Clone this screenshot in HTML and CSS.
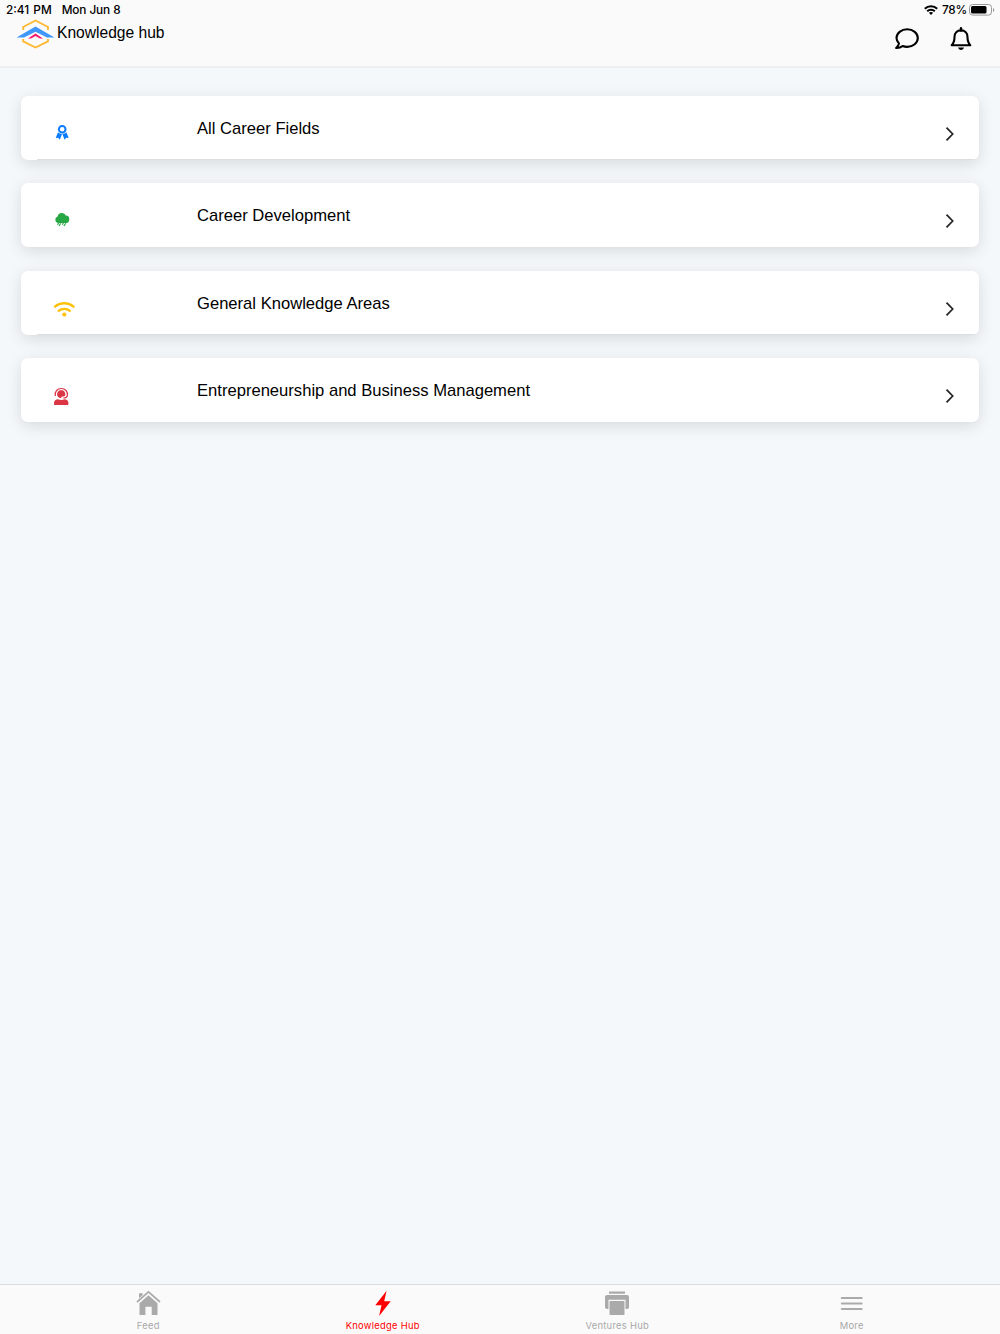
FILE: index.html
```html
<!DOCTYPE html>
<html lang="en">
<head>
    <meta charset="UTF-8">
    <title>Knowledge hub</title>
    <link rel="stylesheet" href="styles.css">
</head>
<body>
    <header class="header">
        <div class="status-bar">
            <span class="time">2:41 PM</span>
            <span class="date">Mon Jun 8</span>
            <svg class="wifi" width="14" height="10" viewBox="0 0 14 10" fill="none" stroke="#000" stroke-width="2">
                <path d="M.8 3.7C4.2.3 9.800.3 13.200 3.700M3.200 6.200c2-2 5.600-2 7.600 0"/>
                <path d="M4.900 7.800c1.200-1 3-1 4.200 0L7 9.900z" fill="#000" stroke="none"/>
            </svg>
            <span class="percent">78%</span>
            <svg class="battery" width="26" height="12" viewBox="0 0 26 12">
                <rect x=".5" y=".5" width="22" height="10.600" rx="3" fill="none" stroke="#999"/>
                <rect x="2" y="2" width="15.500" height="7.600" rx="1.500"/>
                <path d="M24 4v4c1.700-.6 1.700-3.400 0-4z" fill="#999"/>
            </svg>
        </div>
        <div class="title-bar">
            <svg class="logo" width="40" height="30" viewBox="0 0 40 30">
                <path d="M8.200 11V8L20.500 1.500 33 8v3M8.200 20v2.300l12.300 6.200L33 22.300V20" fill="none" stroke="#fdb933" stroke-width="1.900"/>
                <path d="M1.500 18.500L20.500 7.500 39.500 18.500H32L20.500 12.700 9 18.500z" fill="#3f97fb"/>
                <path d="M13 19.500l7.500-4.900L28 19.500h-3l-4.500-2.600-4.500 2.600z" fill="#f5166c"/>
            </svg>
            <h1>Knowledge hub</h1>
            <div class="actions">
                <svg width="26" height="24" viewBox="0 0 26 24" fill="none" stroke="#000" stroke-width="2.100" stroke-linejoin="round">
                    <path d="M5 16.400C3.400 14.900 2.500 13.100 2.500 11 2.500 6.100 7.300 2.300 13.200 2.300S23.800 6.100 23.800 11s-4.700 8.900-10.600 8.900c-1.700 0-3.200-.3-4.600-.9-1.500 1.300-3.700 2.100-6.500 2 1.700-1.300 2.600-2.900 2.900-4.600z"/>
                </svg>
                <svg width="22" height="24" viewBox="0 0 22 24" fill="none" stroke="#000" stroke-width="2.100" stroke-linejoin="round">
                    <path d="M1.700 18.200C4 16 4.500 14.500 4.500 10c0-4 2.500-6.600 6.500-6.600s6.500 2.600 6.500 6.600c0 4.500.5 6 2.800 8.200z"/>
                    <path d="M11 1.200v2.300" stroke-width="2.400" stroke-linecap="round"/>
                    <path d="M8 20.500h6c-.5 1.600-1.500 2.500-3 2.500S8.500 22.100 8 20.500z" fill="#000" stroke="none"/>
                </svg>
            </div>
        </div>
    </header>

    <main class="content">
        <div class="card underlined">
            <svg class="icon" width="22" height="20" viewBox="0 0 22 20">
                <circle cx="9.200" cy="6.200" r="3.300" fill="none" stroke="#0a7bff" stroke-width="2"/>
                <path d="M5 9.300L2.700 15l2.500-.2 1.600 2 2.200-5.800c-1.500 0-3-.4-4-1.700zM13.400 9.300l2.300 5.700-2.500-.2-1.600 2-2.200-5.800c1.500 0 3-.4 4-1.700z" fill="#0a7bff"/>
            </svg>
            <span class="label">All Career Fields</span>
            <svg class="arrow" width="10" height="16" viewBox="0 0 10 16"><path d="M1.500 1.700L7.700 8l-6.200 6.300"/></svg>
        </div>
        <div class="card">
            <svg class="icon" width="22" height="20" viewBox="0 0 22 20">
                <path d="M5 13a3.300 3.300 0 0 1-.4-6.400C4.800 4.600 6.500 3 8.800 3c1.900 0 3.200 1 3.900 2.400a3.800 3.800 0 0 1-.4 7.600z" fill="#28a745"/>
                <path d="M5.500 13l-1 1.700m3.200-1.500L6 16m4.400-2.800l-1 1.500m3.300-1.500L11 16" stroke="#28a745" stroke-width="1.200"/>
            </svg>
            <span class="label">Career Development</span>
            <svg class="arrow" width="10" height="16" viewBox="0 0 10 16"><path d="M1.500 1.700L7.700 8l-6.200 6.300"/></svg>
        </div>
        <div class="card underlined">
            <svg class="icon low" width="22" height="20" viewBox="0 0 22 20">
                <path d="M2 6.700c5.300-4.600 13.200-4.600 18.500 0M5.700 10.800c3.200-2.700 8-2.700 11.200 0" fill="none" stroke="#ffc107" stroke-width="2.300" stroke-linecap="round"/>
                <circle cx="11.300" cy="14.500" r="2.100" fill="#ffc107"/>
            </svg>
            <span class="label">General Knowledge Areas</span>
            <svg class="arrow" width="10" height="16" viewBox="0 0 10 16"><path d="M1.500 1.700L7.700 8l-6.200 6.300"/></svg>
        </div>
        <div class="card">
            <svg class="icon low" width="22" height="20" viewBox="0 0 22 20">
                <path d="M2.300 9C1.500 4.300 4.500 1.500 8.300 1.500s6.900 2.800 6 7.500c-.5 1.500-2 2-4 2" fill="none" stroke="#dc3545" stroke-width="1.200"/>
                <path d="M4.200 8.500C3.800 5.300 5.400 3.300 8.200 3.300s4.500 2 4 5.200c-.7.800-1.500 1.100-2.700 1.100-1.200 0-1.600.9-1 1.700-2 0-3.400-1-4.300-2.800z" fill="#dc3545"/>
                <path d="M1 17.200v-1.200C1 13.600 3 12.300 5 12.300c2 .8 4.600.8 6.400 0 2.200 0 4 1.300 4 3.700v1.200c0 .4-.3.700-.7.700H1.700c-.4 0-.7-.3-.7-.7z" fill="#dc3545"/>
            </svg>
            <span class="label">Entrepreneurship and Business Management</span>
            <svg class="arrow" width="10" height="16" viewBox="0 0 10 16"><path d="M1.500 1.700L7.700 8l-6.200 6.300"/></svg>
        </div>
    </main>

    <nav class="tabs">
        <div class="tab">
            <svg width="26" height="26" viewBox="0 0 26 26" fill="#aaa">
                <path d="M4 3.200h3.700V5L4 8.300z"/>
                <path d="M13.500 5.200l9 8V25h-5.800v-8.300h-6.300V25H4.500V13.200z"/>
                <path d="M2 12L13.500 1.900 25 12" fill="none" stroke="#aaa" stroke-width="1.700"/>
            </svg>
            <span>Feed</span>
        </div>
        <div class="tab active">
            <svg width="26" height="26" viewBox="0 0 26 26"><path d="M16.600.8L5.300 15.200h6.200L9.100 26l11.600-14.800h-6.500z" fill="#f00"/></svg>
            <span>Knowledge Hub</span>
        </div>
        <div class="tab">
            <svg width="26" height="26" viewBox="0 0 26 26" fill="#aaa">
                <path d="M5 1.500h16v2.200H5zM3 5h20c1.200 0 2 .8 2 2v10c0 1.200-.8 2-2 2h-1.500V9.700h-17V19H3c-1.200 0-2-.8-2-2V7c0-1.200.8-2 2-2z"/>
                <rect x="5.500" y="11" width="15" height="14" rx=".8"/>
            </svg>
            <span>Ventures Hub</span>
        </div>
        <div class="tab">
            <svg width="26" height="26" viewBox="0 0 26 26"><path d="M2.700 8h20M2.700 13.500h20M2.700 19h20" stroke="#aaa" stroke-width="1.800" stroke-linecap="round"/></svg>
            <span>More</span>
        </div>
    </nav>
</body>
</html>
```
FILE: styles.css
```css
* {
    box-sizing: border-box;
}

body {
    margin: 0;
    height: 100vh;
    display: flex;
    flex-direction: column;
    overflow: hidden;
    background-color: #f4f8fb;
    color: #000;
    font-family: "Liberation Sans", Arial, sans-serif;
}

svg {
    display: block;
    flex-shrink: 0;
}

.header {
    height: 68px;
    background-color: #fafafa;
    border-bottom: 2px solid #eceef0;
}

.status-bar {
    display: flex;
    align-items: center;
    height: 20px;
    padding-left: 6px;
    padding-right: 5px;
    font: 500 11.8px/20px Inter, sans-serif;
}

.time {
    word-spacing: 1px;
}

.date {
    margin-left: 10px;
    letter-spacing: -0.1px;
}

.wifi {
    margin-left: auto;
}

.percent {
    margin-left: 4px;
    letter-spacing: -0.2px;
}

.battery {
    margin-left: 2px;
}

.title-bar {
    display: flex;
    align-items: flex-start;
    padding-left: 15px;
    padding-right: 28px;
}

.logo {
    margin-top: -1px;
}

h1 {
    margin: 3px 0 0 2px;
    font-size: 15.6px;
    font-weight: normal;
    line-height: 20px;
}

.actions {
    display: flex;
    gap: 30px;
    margin: 7px 0 0 auto;
}

.content {
    flex: 1;
    display: flex;
    flex-direction: column;
    gap: 23.5px;
    padding: 27.6px 21px;
}

.card {
    display: flex;
    height: 64px;
    padding: 0 24px 0 32px;
    background-color: #fff;
    border-radius: 7px;
    box-shadow: 0 4px 16px rgba(0, 0, 0, 0.12);
}

.underlined {
    background-image: linear-gradient(#dcdedf, #dcdedf);
    background-position: 16px 100%;
    background-repeat: no-repeat;
    background-size: 100% 1px;
}

.icon {
    margin-top: 27px;
}

.icon.low {
    margin-top: 29px;
}

.icon + .label {
    margin: 23.4px 0 0 122px;
    font-size: 16.6px;
    line-height: 20px;
}

.arrow {
    margin: 30px 0 0 auto;
    fill: none;
    stroke: #222;
    stroke-width: 1.7;
}

.tabs {
    display: flex;
    height: 50px;
    padding: 5px 31px 0;
    background-color: #fafafa;
    border-top: 1px solid #d8dde0;
}

.tab {
    flex: 1;
    display: flex;
    flex-direction: column;
    align-items: center;
    color: #a8a8a8;
    font: 400 9.4px/12px Inter, sans-serif;
    letter-spacing: 0.28px;
}

.tab span {
    margin-top: 4px;
}

.tab.active {
    color: #f00;
}
```
